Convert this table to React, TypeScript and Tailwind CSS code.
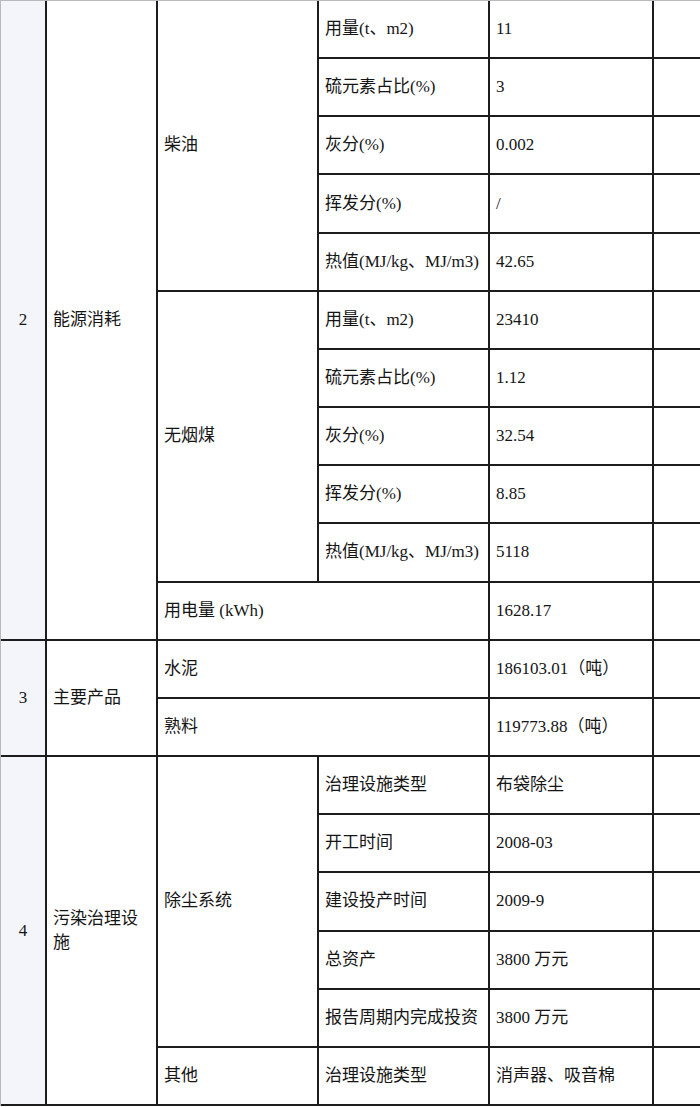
import React from "react";

const B = "flex items-center px-[6px] border-b-2 border-[#1c1c1c] min-w-0";
const R = " border-r-2";
const NUM = " justify-center bg-[#f4f4fb]";

type C = { cls: string; text?: string };

const cells: C[] = [
  // group 2
  { cls: B + R + NUM + " col-start-1 row-start-1 row-span-11", text: "2" },
  { cls: B + R + " col-start-2 row-start-1 row-span-11", text: "能源消耗" },
  { cls: B + R + " col-start-3 row-start-1 row-span-5", text: "柴油" },
  { cls: B + R + " col-start-4 row-start-1", text: "用量(t、m2)" },
  { cls: B + R + " col-start-5 row-start-1", text: "11" },
  { cls: B + " col-start-6 row-start-1" },
  { cls: B + R + " col-start-4 row-start-2", text: "硫元素占比(%)" },
  { cls: B + R + " col-start-5 row-start-2", text: "3" },
  { cls: B + " col-start-6 row-start-2" },
  { cls: B + R + " col-start-4 row-start-3", text: "灰分(%)" },
  { cls: B + R + " col-start-5 row-start-3", text: "0.002" },
  { cls: B + " col-start-6 row-start-3" },
  { cls: B + R + " col-start-4 row-start-4", text: "挥发分(%)" },
  { cls: B + R + " col-start-5 row-start-4", text: "/" },
  { cls: B + " col-start-6 row-start-4" },
  { cls: B + R + " col-start-4 row-start-5", text: "热值(MJ/kg、MJ/m3)" },
  { cls: B + R + " col-start-5 row-start-5", text: "42.65" },
  { cls: B + " col-start-6 row-start-5" },
  { cls: B + R + " col-start-3 row-start-6 row-span-5", text: "无烟煤" },
  { cls: B + R + " col-start-4 row-start-6", text: "用量(t、m2)" },
  { cls: B + R + " col-start-5 row-start-6", text: "23410" },
  { cls: B + " col-start-6 row-start-6" },
  { cls: B + R + " col-start-4 row-start-7", text: "硫元素占比(%)" },
  { cls: B + R + " col-start-5 row-start-7", text: "1.12" },
  { cls: B + " col-start-6 row-start-7" },
  { cls: B + R + " col-start-4 row-start-8", text: "灰分(%)" },
  { cls: B + R + " col-start-5 row-start-8", text: "32.54" },
  { cls: B + " col-start-6 row-start-8" },
  { cls: B + R + " col-start-4 row-start-9", text: "挥发分(%)" },
  { cls: B + R + " col-start-5 row-start-9", text: "8.85" },
  { cls: B + " col-start-6 row-start-9" },
  { cls: B + R + " col-start-4 row-start-10", text: "热值(MJ/kg、MJ/m3)" },
  { cls: B + R + " col-start-5 row-start-10", text: "5118" },
  { cls: B + " col-start-6 row-start-10" },
  { cls: B + R + " col-start-3 col-span-2 row-start-11", text: "用电量 (kWh)" },
  { cls: B + R + " col-start-5 row-start-11", text: "1628.17" },
  { cls: B + " col-start-6 row-start-11" },
  // group 3
  { cls: B + R + NUM + " col-start-1 row-start-12 row-span-2", text: "3" },
  { cls: B + R + " col-start-2 row-start-12 row-span-2", text: "主要产品" },
  { cls: B + R + " col-start-3 col-span-2 row-start-12", text: "水泥" },
  { cls: B + R + " col-start-5 row-start-12", text: "186103.01（吨）" },
  { cls: B + " col-start-6 row-start-12" },
  { cls: B + R + " col-start-3 col-span-2 row-start-13", text: "熟料" },
  { cls: B + R + " col-start-5 row-start-13", text: "119773.88（吨）" },
  { cls: B + " col-start-6 row-start-13" },
  // group 4
  { cls: B + R + NUM + " col-start-1 row-start-14 row-span-6", text: "4" },
  { cls: B + R + " col-start-2 row-start-14 row-span-6", text: "污染治理设施" },
  { cls: B + R + " col-start-3 row-start-14 row-span-5", text: "除尘系统" },
  { cls: B + R + " col-start-4 row-start-14", text: "治理设施类型" },
  { cls: B + R + " col-start-5 row-start-14", text: "布袋除尘" },
  { cls: B + " col-start-6 row-start-14" },
  { cls: B + R + " col-start-4 row-start-15", text: "开工时间" },
  { cls: B + R + " col-start-5 row-start-15", text: "2008-03" },
  { cls: B + " col-start-6 row-start-15" },
  { cls: B + R + " col-start-4 row-start-16", text: "建设投产时间" },
  { cls: B + R + " col-start-5 row-start-16", text: "2009-9" },
  { cls: B + " col-start-6 row-start-16" },
  { cls: B + R + " col-start-4 row-start-17", text: "总资产" },
  { cls: B + R + " col-start-5 row-start-17", text: "3800 万元" },
  { cls: B + " col-start-6 row-start-17" },
  { cls: B + R + " col-start-4 row-start-18", text: "报告周期内完成投资" },
  { cls: B + R + " col-start-5 row-start-18", text: "3800 万元" },
  { cls: B + " col-start-6 row-start-18" },
  { cls: B + R + " col-start-3 row-start-19", text: "其他" },
  { cls: B + R + " col-start-4 row-start-19", text: "治理设施类型" },
  { cls: B + R + " col-start-5 row-start-19", text: "消声器、吸音棉" },
  { cls: B + " col-start-6 row-start-19" },
];

export default function App() {
  return (
    <div className="w-[700px] h-[1107px] bg-white font-['Liberation_Serif','Noto_Sans_CJK_SC',serif] text-[17px] leading-[24px] text-[#151515]">
      <div className="grid h-[1106px] grid-cols-[46px_111px_161px_171px_164px_46px] grid-rows-[repeat(19,minmax(0,1fr))] border-t border-l border-[#b8b8c0]">
        {cells.map((c, i) => (
          <div key={i} className={c.cls}>
            {c.text ? <span className="whitespace-pre-wrap">{c.text}</span> : null}
          </div>
        ))}
      </div>
    </div>
  );
}
